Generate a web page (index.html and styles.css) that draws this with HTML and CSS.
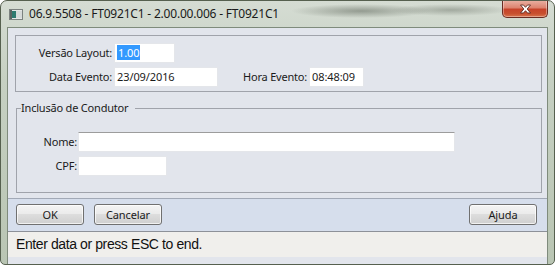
FILE: index.html
```html
<!DOCTYPE html>
<html lang="pt">
<head>
<meta charset="utf-8">
<title>FT0921C1</title>
<link rel="stylesheet" href="styles.css">
</head>
<body>
<div class="window">
  <div class="titlebar">
    <svg class="app-icon" width="14" height="11" viewBox="0 0 14 11">
      <rect x="0.5" y="0.5" width="13" height="10" fill="#e4e6e6" stroke="#7c8280"/>
      <rect x="1" y="1" width="2" height="9" fill="#5a6462"/>
      <rect x="3" y="2" width="4" height="7" fill="#2f7a70"/>
      <rect x="7" y="2" width="6" height="7" fill="#d6dad9"/>
    </svg>
    <div class="title">06.9.5508 - FT0921C1 - 2.00.00.006 - FT0921C1</div>
    <div class="close">
      <svg width="13" height="10" viewBox="0 0 13 10">
        <path d="M1.5 1 L4.5 1 L6.5 3.3 L8.5 1 L11.5 1 L8.2 5 L11.5 9 L8.5 9 L6.5 6.7 L4.5 9 L1.5 9 L4.8 5 Z" fill="#ffffff" stroke="#5c2a22" stroke-width="0.9" stroke-linejoin="round"/>
      </svg>
    </div>
  </div>
  <div class="client">
    <div class="main">
      <div class="group">
        <div class="row">
          <span class="label w-top">Versão Layout:</span>
          <span class="field f-versao"><span class="sel">1.00</span></span>
        </div>
        <div class="row">
          <span class="label w-top">Data Evento:</span>
          <span class="field f-data">23/09/2016</span>
          <span class="label hora">Hora Evento:</span>
          <span class="field f-hora">08:48:09</span>
        </div>
      </div>
      <fieldset class="group2">
        <legend>Inclusão de Condutor</legend>
        <div class="row">
          <span class="label w-cond">Nome:</span>
          <span class="field f-nome sunken"></span>
        </div>
        <div class="row">
          <span class="label w-cond">CPF:</span>
          <span class="field f-cpf"></span>
        </div>
      </fieldset>
    </div>
    <div class="buttonbar">
      <button class="btn">OK</button>
      <button class="btn">Cancelar</button>
      <button class="btn push-right">Ajuda</button>
    </div>
    <div class="status">Enter data or press ESC to end.</div>
  </div>
</div>
</body>
</html>
```

FILE: styles.css
```css
html, body {
  margin: 0;
  padding: 0;
}
body {
  width: 555px;
  height: 265px;
  overflow: hidden;
  background: #ffffff;
}
.window {
  width: 555px;
  height: 265px;
  box-sizing: border-box;
  border: 1px solid #56604f;
  border-radius: 7px 7px 5px 5px;
  background:
    radial-gradient(ellipse 70px 7px at 360px 10px, rgba(70,78,66,0.45), rgba(70,78,66,0) 100%),
    radial-gradient(ellipse 60px 6px at 450px 9px, rgba(70,78,66,0.35), rgba(70,78,66,0) 100%),
    linear-gradient(180deg, #d5dcd3 0%, #c6d0c2 30%, #b9c5b3 100%);
  display: flex;
  flex-direction: column;
  font-family: "Noto Sans", "Open Sans", sans-serif;
  color: #1b1b1b;
  overflow: hidden;
}
.titlebar {
  height: 26px;
  flex: none;
  display: flex;
  align-items: flex-start;
}
.app-icon {
  margin: 8px 0 0 8px;
  flex: none;
}
.title {
  margin: 5px 0 0 6px;
  font-size: 12px;
  letter-spacing: -0.2px;
  line-height: 16px;
  color: #1a1a1a;
  white-space: nowrap;
}
.close {
  margin: -1px 6px 0 auto;
  width: 46px;
  height: 18px;
  box-sizing: border-box;
  border: 1px solid #6a2c22;
  border-top: none;
  border-radius: 0 0 5px 5px;
  background: linear-gradient(180deg, #eab3a6 0%, #dd8470 45%, #c7432a 55%, #c8502f 80%, #d8744e 100%);
  box-shadow: inset 0 0 0 1px rgba(255,255,255,0.35);
  display: flex;
  align-items: center;
  justify-content: center;
}
.client {
  flex: 1;
  margin: 0 6px 0 6px;
  border: 1px solid #7f8b7c;
  border-bottom: none;
  display: flex;
  flex-direction: column;
  background: #e2e5ec;
}
.main {
  height: 170px;
  box-sizing: border-box;
  padding: 7px 5px 0 7px;
  display: flex;
  flex-direction: column;
}
.group {
  height: 57px;
  box-sizing: border-box;
  border: 1px solid #a0a3ab;
  padding: 7px 0 0 0;
  display: flex;
  flex-direction: column;
  gap: 4px;
}
.row {
  display: flex;
  align-items: center;
  height: 20px;
}
.label {
  font-size: 11px;
  letter-spacing: -0.2px;
  line-height: 20px;
  white-space: nowrap;
  text-align: right;
  flex: none;
}
.w-top {
  width: 96px;
  margin-right: 2px;
}
.w-cond {
  width: 60px;
  margin-right: 1px;
}
.hora {
  margin-left: 25px;
  margin-right: 2px;
}
.field {
  height: 20px;
  box-sizing: border-box;
  background: #ffffff;
  border: 1px solid #e4e6ea;
  font-size: 11px;
  letter-spacing: -0.1px;
  line-height: 18px;
  padding-left: 2px;
  white-space: nowrap;
  flex: none;
}
.sunken {
  border-top-color: #9c9c9c;
}
.f-versao { width: 61px; }
.f-data { width: 104px; }
.f-hora { width: 55px; }
.f-nome { width: 377px; }
.f-cpf { width: 89px; }
.sel {
  background: #3399ff;
  color: #ffffff;
  padding: 0 1px;
  display: inline-block;
  line-height: 15px;
  margin-top: 1px;
}
.group2 {
  margin: 9px 0 0 1px;
  padding: 0 0 16px 0;
  border: 1px solid #a0a3ab;
  min-width: 0;
  display: flex;
  flex-direction: column;
  gap: 4px;
}
.group2 legend {
  font-size: 11px;
  letter-spacing: -0.2px;
  line-height: 14px;
  padding: 0 7px 0 0;
  margin-left: 4px;
  margin-bottom: 17px;
}
.buttonbar {
  height: 34px;
  box-sizing: border-box;
  border-top: 1px solid #a2a9b6;
  border-bottom: 1px solid #8d9199;
  background: #d6deec;
  display: flex;
  align-items: flex-start;
  padding: 5px 10px 0 8px;
  gap: 10px;
}
.btn {
  width: 68px;
  height: 21px;
  box-sizing: border-box;
  border: 1px solid #707070;
  border-radius: 3px;
  background: linear-gradient(180deg, #f4f4f4 0%, #ebebeb 45%, #dddddd 50%, #cfcfcf 100%);
  box-shadow: inset 0 0 0 1px rgba(255,255,255,0.7);
  font-family: "Noto Sans", "Open Sans", sans-serif;
  font-size: 11px;
  letter-spacing: -0.1px;
  color: #1b1b1b;
  padding: 0;
  line-height: 18px;
}
.push-right {
  margin-left: auto;
}
.status {
  height: 25px;
  flex: none;
  background: #f0efec;
  font-family: "Liberation Sans", Arial, sans-serif;
  font-size: 14px;
  letter-spacing: -0.4px;
  line-height: 25px;
  padding-left: 8px;
  color: #111111;
  white-space: nowrap;
}
```
